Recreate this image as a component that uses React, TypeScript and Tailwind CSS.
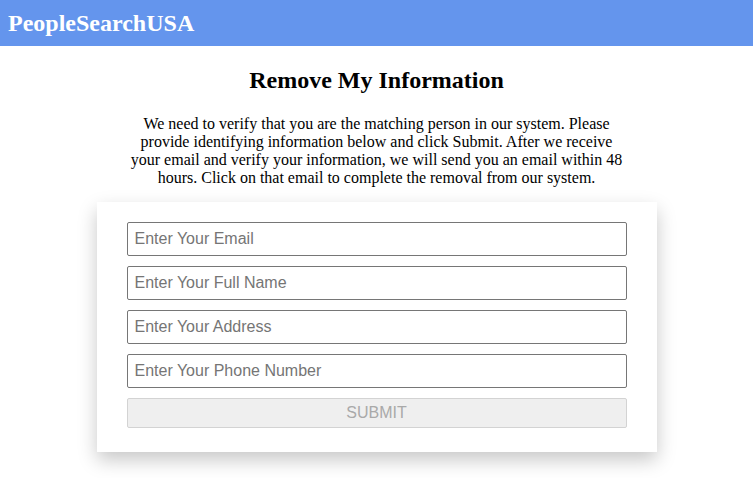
import React from 'react';

const fields = [
  { type: 'email', placeholder: 'Enter Your Email' },
  { type: 'text', placeholder: 'Enter Your Full Name' },
  { type: 'text', placeholder: 'Enter Your Address' },
  { type: 'tel', placeholder: 'Enter Your Phone Number' },
];

const App = () => {
  return (
    <div className="min-h-screen bg-white font-['Liberation_Serif',serif] text-black">
      <header className="h-[46px] bg-[#6495ed] flex items-center px-2">
        <h1 className="text-[24px] font-bold text-white leading-none">PeopleSearchUSA</h1>
      </header>

      <main className="flex flex-col items-center">
        <h2 className="mt-[20px] text-[24px] font-bold leading-[28px]">Remove My Information</h2>
        <p className="mt-[21px] max-w-[500px] text-center text-[16px] leading-[18px]">
          We need to verify that you are the matching person in our system. Please provide identifying
          information below and click Submit. After we receive your email and verify your information, we
          will send you an email within 48 hours. Click on that email to complete the removal from our system.
        </p>

        <form
          className="mt-[15px] w-[560px] bg-white px-[30px] pt-[20px] pb-[24px] flex flex-col gap-[10px] shadow-[0_8px_18px_rgba(0,0,0,0.22)]"
          onSubmit={(e) => e.preventDefault()}
        >
          {fields.map((f) => (
            <input
              key={f.placeholder}
              type={f.type}
              placeholder={f.placeholder}
              className="h-[34px] w-full border border-[#767676] rounded-[2px] px-[7px] font-['Liberation_Sans',Arial,sans-serif] text-[16px] text-black placeholder:text-[#757575] outline-none"
            />
          ))}
          <button
            type="submit"
            disabled
            className="h-[30px] w-full border border-[#d3d3d3] rounded-[2px] bg-[#efefef] font-['Liberation_Sans',Arial,sans-serif] text-[16px] text-[#a9a9a9]"
          >
            SUBMIT
          </button>
        </form>
      </main>
    </div>
  );
};

export default App;
